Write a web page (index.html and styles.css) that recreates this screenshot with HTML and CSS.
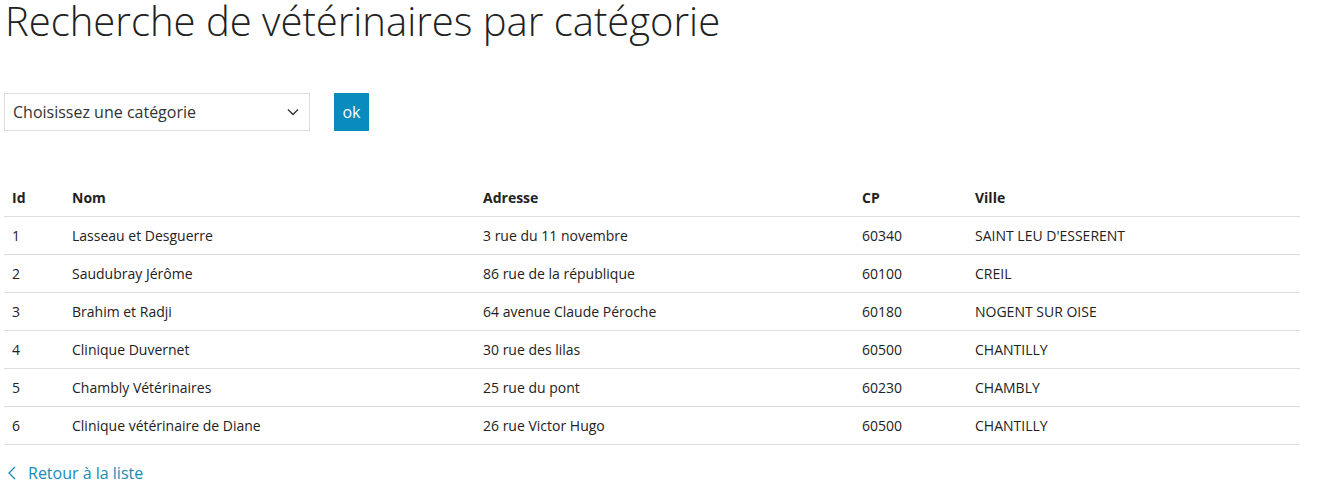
FILE: index.html
```html
<!DOCTYPE html>
<html lang="fr">
<head>
<meta charset="utf-8">
<title>Recherche de vétérinaires par catégorie</title>
<link rel="stylesheet" href="styles.css">
</head>
<body>
<div class="page">
  <h1 class="title">Recherche de vétérinaires par catégorie</h1>
  <form class="search">
    <div class="select">
      <span class="select-label">Choisissez une catégorie</span>
      <svg class="chev" width="12" height="8" viewBox="0 0 12 8"><path d="M1 1.5 L6 6.5 L11 1.5" fill="none" stroke="#333" stroke-width="1.4"/></svg>
    </div>
    <button type="button" class="btn">ok</button>
  </form>
  <table class="tbl">
    <colgroup><col class="c-id"><col class="c-nom"><col class="c-adr"><col class="c-cp"><col class="c-ville"></colgroup>
    <thead>
      <tr><th>Id</th><th>Nom</th><th>Adresse</th><th>CP</th><th>Ville</th></tr>
    </thead>
    <tbody>
      <tr><td>1</td><td>Lasseau et Desguerre</td><td>3 rue du 11 novembre</td><td>60340</td><td>SAINT LEU D'ESSERENT</td></tr>
      <tr><td>2</td><td>Saudubray Jérôme</td><td>86 rue de la république</td><td>60100</td><td>CREIL</td></tr>
      <tr><td>3</td><td>Brahim et Radji</td><td>64 avenue Claude Péroche</td><td>60180</td><td>NOGENT SUR OISE</td></tr>
      <tr><td>4</td><td>Clinique Duvernet</td><td>30 rue des lilas</td><td>60500</td><td>CHANTILLY</td></tr>
      <tr><td>5</td><td>Chambly Vétérinaires</td><td>25 rue du pont</td><td>60230</td><td>CHAMBLY</td></tr>
      <tr><td>6</td><td>Clinique vétérinaire de Diane</td><td>26 rue Victor Hugo</td><td>60500</td><td>CHANTILLY</td></tr>
    </tbody>
  </table>
  <a class="back" href="#"><svg class="back-ico" width="8" height="14" viewBox="0 0 8 14"><path d="M7 1 L1 7 L7 13" fill="none" stroke="#1a8ab5" stroke-width="1.3"/></svg>Retour à la liste</a>
</div>
</body>
</html>
```
FILE: styles.css
```css
html, body { margin: 0; padding: 0; background: #fff; }
body { font-family: "Open Sans", "Liberation Sans", sans-serif; color: #222; font-size: 14px; }
.page { padding: 0 4px; width: 1296px; }
.title { font-weight: 300; font-size: 40px; line-height: 42px; margin: 0 0 0 1px; color: #222; letter-spacing: 0; }
.search { display: flex; align-items: stretch; gap: 24px; margin-top: 51px; }
.select { box-sizing: border-box; width: 306px; height: 38px; border: 1px solid #ddd; display: flex; align-items: center; justify-content: space-between; padding: 0 10px 0 8px; font-size: 16px; color: #333; }
.chev { display: block; }
.btn { box-sizing: border-box; width: 35px; height: 38px; border: 0; background: #0a8bbd; color: #fff; font-family: "Open Sans", sans-serif; font-size: 16px; padding: 0; margin: 0; }
.tbl { width: 1296px; table-layout: fixed; border-collapse: collapse; margin-top: 47px; }
.tbl th { text-align: left; font-weight: 700; height: 38px; padding: 2px 8px 0; border-bottom: 1px solid #ddd; box-sizing: border-box; }
.tbl td { height: 38px; padding: 0 8px; border-bottom: 1px solid #ddd; box-sizing: border-box; }
.c-id { width: 60px; }
.c-nom { width: 411px; }
.c-adr { width: 379px; }
.c-cp { width: 113px; }
.c-ville { width: 333px; }
.back { display: inline-flex; align-items: center; gap: 12px; margin: 17px 0 0 4px; color: #1a8ab5; text-decoration: none; font-size: 16px; }
.back-ico { display: block; }
```
